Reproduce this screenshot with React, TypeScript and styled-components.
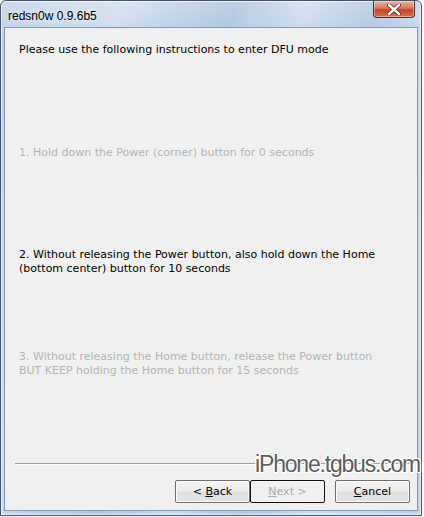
import React from "react";
import styled, { createGlobalStyle } from "styled-components";

const GlobalStyle = createGlobalStyle`
  html, body {
    margin: 0;
    padding: 0;
    background: #ffffff;
  }
  body {
    font-family: "Liberation Sans", Arial, sans-serif;
  }
`;

const Window = styled.div`
  width: 422px;
  height: 516px;
  box-sizing: border-box;
  display: flex;
  flex-direction: column;
  border: 1px solid #44566c;
  border-radius: 6px 6px 0 0;
  padding: 0 3px 4px 3px;
  background: linear-gradient(
      105deg,
      rgba(255, 255, 255, 0) 0%,
      rgba(255, 255, 255, 0.25) 22%,
      rgba(255, 255, 255, 0) 30%,
      rgba(120, 150, 190, 0.18) 42%,
      rgba(255, 255, 255, 0.2) 55%,
      rgba(120, 150, 190, 0.15) 68%,
      rgba(255, 255, 255, 0.25) 80%,
      rgba(255, 255, 255, 0) 100%
    ),
    linear-gradient(to bottom, #cddcec, #b9cfe7 40px, #bcd3ea);
  box-shadow: inset 0 0 0 1px rgba(255, 255, 255, 0.6);
  position: relative;
`;

const TitleBar = styled.div`
  height: 26px;
  display: flex;
  align-items: flex-start;
  justify-content: space-between;
`;

const Title = styled.span`
  font-family: "Liberation Sans", Arial, sans-serif;
  font-size: 12px;
  color: #000;
  margin: 8px 0 0 4px;
  text-shadow: 0 0 6px rgba(255, 255, 255, 0.9);
`;

const CloseButton = styled.div`
  width: 42px;
  height: 17px;
  margin-right: 3px;
  box-sizing: border-box;
  border: 1px solid #5a2a24;
  border-top: none;
  border-radius: 0 0 4px 4px;
  background: linear-gradient(to bottom, #e8b4a6 0%, #d47a62 45%, #c1432a 55%, #d9704f 100%);
  display: flex;
  align-items: center;
  justify-content: center;
  box-shadow: inset 0 0 0 1px rgba(255, 255, 255, 0.4);
`;

const Client = styled.div`
  flex: 1;
  display: flex;
  flex-direction: column;
  background: #f0f0f0;
  border: 1px solid #8199b4;
`;

const Content = styled.div`
  flex: 1;
  padding: 15px 14px 0 14px;
  font-family: "DejaVu Sans", sans-serif;
  font-size: 11px;
  line-height: 14px;
`;

const Heading = styled.p`
  margin: 0;
  color: #000;
`;

const Steps = styled.div`
  margin-top: 89px;
`;

const Step = styled.p<{ $active?: boolean }>`
  margin: 0;
  height: 102px;
  color: ${(p) => (p.$active ? "#000" : "#b4b4b4")};
`;

const Footer = styled.div`
  position: relative;
  padding: 0 7px 7px 10px;
`;

const Separator = styled.div`
  height: 0;
  border-top: 1px solid #a0a0a0;
  border-bottom: 1px solid #ffffff;
  margin-bottom: 15px;
`;

const Buttons = styled.div`
  display: flex;
  justify-content: flex-end;
`;

const Button = styled.button<{ $default?: boolean; $gap?: number }>`
  width: 75px;
  height: 23px;
  margin-left: ${(p) => p.$gap ?? 0}px;
  box-sizing: border-box;
  border: 1px solid ${(p) => (p.$default ? "#101010" : "#707070")};
  border-radius: 2px;
  background: linear-gradient(to bottom, #f4f4f4 0%, #ececec 48%, #dfdfdf 52%, #e2e2e2 100%);
  box-shadow: inset 0 0 0 1px #fafafa;
  font-family: "DejaVu Sans", sans-serif;
  font-size: 11px;
  color: #000;
  padding: 0;
  cursor: default;

  &:disabled {
    color: #a8a8a8;
    background: #f0f0f0;
    box-shadow: inset 0 0 0 1px #f4f4f4;
  }
`;

const Watermark = styled.div`
  position: absolute;
  right: -3px;
  top: -12px;
  font-family: "Liberation Sans", Arial, sans-serif;
  font-size: 23px;
  letter-spacing: -1.2px;
  color: #5e5e5e;
  text-shadow: 1px 0 0 #fff, -1px 0 0 #fff, 0 1px 0 #fff, 0 -1px 0 #fff,
    1px 1px 0 #fff, -1px -1px 0 #fff, 1px -1px 0 #fff, -1px 1px 0 #fff;
  pointer-events: none;
`;

const CloseGlyph = () => (
  <svg width="14" height="11" viewBox="0 0 14 11">
    <path
      d="M2 1 L12 10 M12 1 L2 10"
      stroke="#4a2a24"
      strokeWidth="4"
      strokeLinecap="round"
    />
    <path
      d="M2 1 L12 10 M12 1 L2 10"
      stroke="#ffffff"
      strokeWidth="2.4"
      strokeLinecap="round"
    />
  </svg>
);

const App = () => {
  return (
    <>
      <GlobalStyle />
      <Window>
        <TitleBar>
          <Title>redsn0w 0.9.6b5</Title>
          <CloseButton>
            <CloseGlyph />
          </CloseButton>
        </TitleBar>
        <Client>
          <Content>
            <Heading>Please use the following instructions to enter DFU mode</Heading>
            <Steps>
              <Step>1. Hold down the Power (corner) button for 0 seconds</Step>
              <Step $active>
                2. Without releasing the Power button, also hold down the Home
                <br />
                (bottom center) button for 10 seconds
              </Step>
              <Step>
                3. Without releasing the Home button, release the Power button
                <br />
                BUT KEEP holding the Home button for 15 seconds
              </Step>
            </Steps>
          </Content>
          <Footer>
            <Separator />
            <Buttons>
              <Button>
                &lt; <u>B</u>ack
              </Button>
              <Button $default disabled>
                <u>N</u>ext &gt;
              </Button>
              <Button $gap={10}>
                <u>C</u>ancel
              </Button>
            </Buttons>
            <Watermark>iPhone.tgbus.com</Watermark>
          </Footer>
        </Client>
      </Window>
    </>
  );
};

export default App;
